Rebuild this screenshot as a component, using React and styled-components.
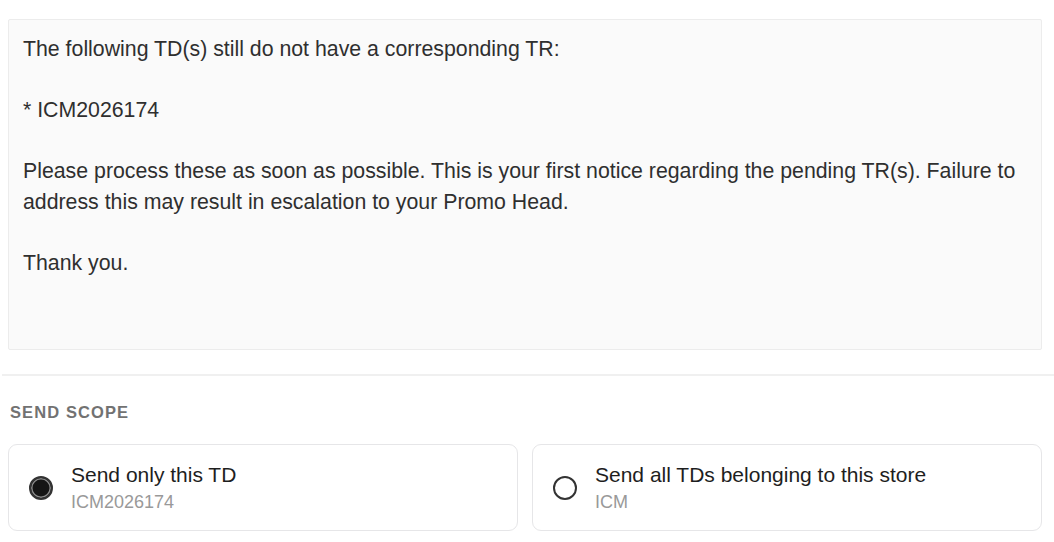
import React from "react";
import styled, { createGlobalStyle } from "styled-components";

const GlobalStyle = createGlobalStyle`
  html, body {
    margin: 0;
    padding: 0;
    background: #ffffff;
  }
  body {
    font-family: "Liberation Sans", Arial, sans-serif;
    color: #333333;
  }
`;

const MESSAGE = `The following TD(s) still do not have a corresponding TR:

* ICM2026174

Please process these as soon as possible. This is your first notice regarding the pending TR(s). Failure to address this may result in escalation to your Promo Head.

Thank you.`;

const SCOPE_OPTIONS = [
  { id: "single", title: "Send only this TD", sub: "ICM2026174" },
  { id: "store", title: "Send all TDs belonging to this store", sub: "ICM" },
];

const Page = styled.div`
  padding: 19px 12px 12px 8px;
  display: flex;
  flex-direction: column;
`;

const MessageBox = styled.div`
  box-sizing: border-box;
  height: 331px;
  padding: 14px 14px;
  background: #fafafa;
  border: 1px solid #ececec;
  border-radius: 2px;
  font-size: 21.3px;
  line-height: 30.5px;
  color: #2f2f2f;
  white-space: pre-wrap;
`;

const Divider = styled.hr`
  border: none;
  border-top: 2px solid #f0f0f0;
  margin: 24px -12px 0 -6px;
`;

const SectionLabel = styled.div`
  margin-top: 25px;
  padding-left: 2px;
  font-size: 16.5px;
  font-weight: 700;
  letter-spacing: 1.1px;
  color: #727272;
  line-height: 22px;
`;

const OptionGrid = styled.div`
  margin-top: 21px;
  display: grid;
  grid-template-columns: 1fr 1fr;
  gap: 14px;
`;

const OptionCard = styled.label`
  box-sizing: border-box;
  height: 87px;
  display: flex;
  align-items: center;
  gap: 18px;
  padding: 0 20px;
  border: 1px solid #e6e6e8;
  border-radius: 9px;
  background: #ffffff;
  cursor: pointer;
`;

const Radio = styled.span`
  box-sizing: border-box;
  flex: none;
  width: 24px;
  height: 24px;
  border-radius: 50%;
  border: 2px solid #333333;
  background: ${(p) => (p.$checked ? "#151515" : "#ffffff")};
  box-shadow: ${(p) =>
    p.$checked ? "inset 0 0 0 1.5px #8a8a8a" : "none"};
`;

const OptionText = styled.div`
  display: flex;
  flex-direction: column;
  gap: 4px;
`;

const OptionTitle = styled.div`
  font-size: 21px;
  line-height: 24px;
  color: #1e1e1e;
`;

const OptionSub = styled.div`
  font-size: 18px;
  line-height: 22px;
  color: #999999;
`;

export default function App() {
  const [scope, setScope] = React.useState("single");

  return (
    <>
      <GlobalStyle />
      <Page>
        <MessageBox>{MESSAGE}</MessageBox>
        <Divider />
        <SectionLabel>SEND SCOPE</SectionLabel>
        <OptionGrid>
          {SCOPE_OPTIONS.map((option) => (
            <OptionCard key={option.id} onClick={() => setScope(option.id)}>
              <Radio $checked={scope === option.id} />
              <OptionText>
                <OptionTitle>{option.title}</OptionTitle>
                <OptionSub>{option.sub}</OptionSub>
              </OptionText>
            </OptionCard>
          ))}
        </OptionGrid>
      </Page>
    </>
  );
}
